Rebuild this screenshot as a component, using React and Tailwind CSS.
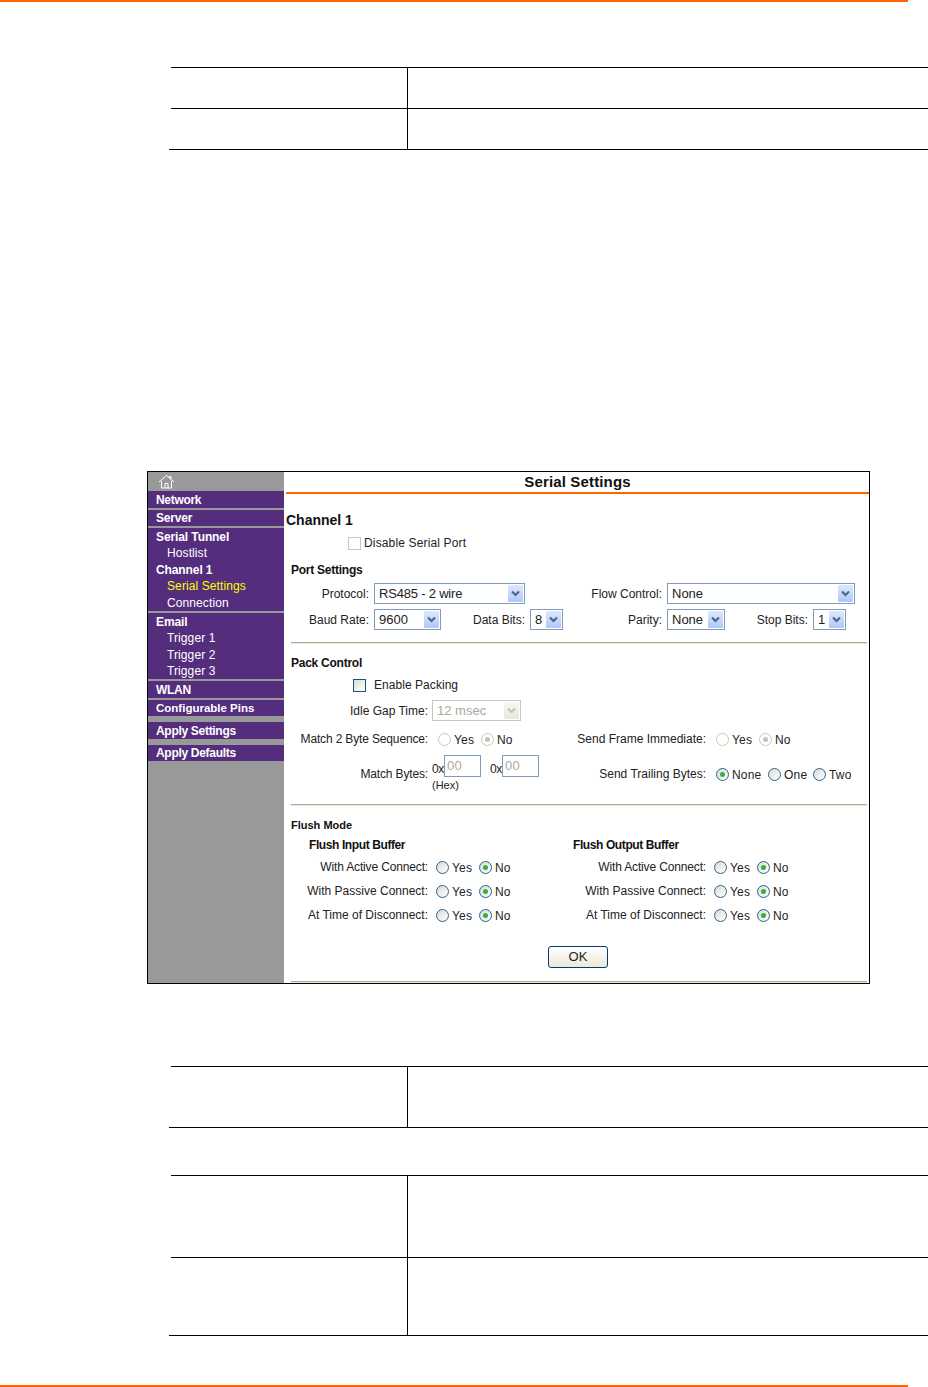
import React from 'react'

const Rule = () => <div className="h-[2px] w-[908px] bg-[#ff6600]" />

// empty two column table, the text of the manual page is blank in the picture
const EmptyTable = ({ heights }) => (
  <div>
    {heights.map((h, i) => (
      <div key={i} className={`ml-[171px] flex w-[757px] border-t border-black ${h}`}>
        <div className="w-[237px] border-r border-black" />
      </div>
    ))}
    <div className="ml-[169px] h-px w-[759px] bg-black" />
  </div>
)

const NavItem = ({ children }) => (
  <div className="flex h-[17px] items-center bg-[#552d7d] pl-2 text-[12px] font-bold tracking-[-0.3px] text-white">
    {children}
  </div>
)

const NavRow = ({ children, sub, active }) => (
  <div
    className={`flex h-[16.5px] items-center text-[12px] ${sub ? 'pl-[19px] tracking-[0.1px]' : 'pl-2 font-bold tracking-[-0.1px]'} ${active ? 'text-[#ffff00]' : 'text-white'}`}
  >
    {children}
  </div>
)

const Chevron = ({ disabled }) => (
  <svg width="9" height="7" viewBox="0 0 9 7" fill="none">
    <path d="M1 1.5 L4.5 5 L8 1.5" stroke={disabled ? '#c4c3b8' : '#4d6185'} strokeWidth="2" />
  </svg>
)

const Select = ({ value, className, disabled }) => (
  <div
    className={`flex h-[21px] shrink-0 items-center justify-between border p-px text-[13px] ${disabled ? 'border-[#c9c7ba] text-[#aca899]' : 'border-[#7f9db9] text-[#222]'} ${className}`}
  >
    <span className="pl-[3px] leading-none">{value}</span>
    <span
      className={`flex h-[17px] w-[15px] items-center justify-center rounded-[1px] bg-gradient-to-b ${disabled ? 'from-[#f7f6f1] to-[#e8e7df]' : 'from-[#dfe8fe] to-[#aec7f8]'}`}
    >
      <Chevron disabled={disabled} />
    </span>
  </div>
)

const Label = ({ children, className }) => (
  <div className={`shrink-0 text-right text-[12px] text-[#222] ${className}`}>{children}</div>
)

const Radio = ({ label, checked, disabled, className }) => (
  <div className={`flex shrink-0 items-center text-[12px] tracking-[0.2px] ${className}`}>
    <span
      className={`flex h-[13px] w-[13px] shrink-0 items-center justify-center rounded-full border bg-gradient-to-br ${disabled ? 'border-[#c9c7ba] from-white to-white' : 'border-[#2c5f8e] from-[#dcdcd4] to-white'}`}
    >
      {checked && <span className={`h-[5px] w-[5px] rounded-full ${disabled ? 'bg-[#c4c3b8]' : 'bg-[#2fb344]'}`} />}
    </span>
    <span className="ml-[3px] pt-[2px] text-[#222]">{label}</span>
  </div>
)

const Hr = ({ className }) => <div className={`ml-[7px] h-[2px] w-[576px] border-t border-[#aca899] bg-[#ece9d8] ${className}`} />

const Heading = ({ children, className }) => (
  <div className={`flex h-4 items-center font-bold text-[#111] ${className}`}>{children}</div>
)

const HexInput = () => (
  <div className="flex h-[22px] w-[37px] shrink-0 items-start border border-[#7f9db9] pl-[2px] text-[13px] leading-[19px] tracking-[0.3px] text-[#aca899]">
    00
  </div>
)

const FlushRows = () => {
  const rows = [
    ['With Active Connect:', 'mt-[6px]', 'tracking-[-0.15px]'],
    ['With Passive Connect:', 'mt-[8px]', ''],
    ['At Time of Disconnect:', 'mt-[8px]', ''],
  ]
  return (
    <div>
      {rows.map(([text, mt, track]) => (
        <div key={text} className={`flex h-4 items-center ${mt}`}>
          <Label className={`w-[144px] pb-px ${track}`}>{text}</Label>
          <Radio label="Yes" className="ml-2 w-[43px]" />
          <Radio label="No" checked />
        </div>
      ))}
    </div>
  )
}

const ScreenShot = () => (
  <div className="ml-[147px] flex h-[513px] w-[723px] border border-black bg-white">
    <div className="flex w-[136px] shrink-0 flex-col bg-[#999999]">
      <div className="flex h-[19px] items-center pl-[10px]">
        <svg width="17" height="15" viewBox="0 0 17 15" fill="none" stroke="white" strokeWidth="1">
          <path d="M1 8 L8.5 1.5 L16 8 M13 5.2 V2.5 H11.5 V3.8 M3.5 7 V14 H13.5 V7 M7 14 V9.5 H10 V14" />
        </svg>
      </div>
      <NavItem>Network</NavItem>
      <div className="mt-[2px] flex h-4 items-center bg-[#552d7d] pl-2 text-[12px] font-bold tracking-[-0.2px] text-white">Server</div>
      <div className="mt-[2px] flex h-[83px] flex-col bg-[#552d7d] pt-[0.5px]">
        <NavRow>Serial Tunnel</NavRow>
        <NavRow sub>Hostlist</NavRow>
        <NavRow>Channel 1</NavRow>
        <NavRow sub active>Serial Settings</NavRow>
        <NavRow sub>Connection</NavRow>
      </div>
      <div className="mt-[2px] flex h-[66px] flex-col bg-[#552d7d] pt-[0.5px]">
        <NavRow>Email</NavRow>
        <NavRow sub>Trigger 1</NavRow>
        <NavRow sub>Trigger 2</NavRow>
        <NavRow sub>Trigger 3</NavRow>
      </div>
      <div className="mt-[2px]"><NavItem>WLAN</NavItem></div>
      <div className="mt-[2px] flex h-4 items-center bg-[#552d7d] pl-2 pt-px text-[11.5px] font-bold text-white">Configurable Pins</div>
      <div className="mt-[6px]"><NavItem>Apply Settings</NavItem></div>
      <div className="mt-[6px] flex h-4 items-center bg-[#552d7d] pl-2 text-[12px] font-bold tracking-[-0.3px] text-white">Apply Defaults</div>
    </div>

    <div className="min-w-0 flex-1">
      <div className="flex h-5 items-center justify-center pl-[2px] text-[15px] font-bold tracking-[0.15px] text-[#111]">Serial Settings</div>
      <div className="ml-[2px] h-[2px] bg-[#ff6600]" />

      <Heading className="ml-[2px] mt-[18px] text-[14px]">Channel 1</Heading>
      <div className="mt-[7px] flex h-4 items-center pl-[64px]">
        <span className="h-[13px] w-[13px] border border-[#c9c7ba]" />
        <span className="ml-[3px] text-[12px] tracking-[0.15px] text-[#222]">Disable Serial Port</span>
      </div>

      <Heading className="ml-[7px] mt-[11px] text-[12px] tracking-[-0.25px]">Port Settings</Heading>
      <div className="mt-[5px] flex items-center">
        <Label className="w-[85px]">Protocol:</Label>
        <Select value={<span className="tracking-[-0.2px]">RS485 - 2 wire</span>} className="ml-[5px] w-[151px]" />
        <Label className="w-[137px]">Flow Control:</Label>
        <Select value="None" className="ml-[5px] w-[188px]" />
      </div>
      <div className="mt-[5px] flex items-center">
        <Label className="w-[85px]">Baud Rate:</Label>
        <Select value="9600" className="ml-[5px] w-[67px]" />
        <Label className="w-[84px]">Data Bits:</Label>
        <Select value="8" className="ml-[5px] w-[33px]" />
        <Label className="w-[99px]">Parity:</Label>
        <Select value="None" className="ml-[5px] w-[58px]" />
        <Label className="w-[83px]">Stop Bits:</Label>
        <Select value="1" className="ml-[5px] w-[33px]" />
      </div>
      <Hr className="mt-[12px]" />

      <Heading className="ml-[7px] mt-[11px] text-[12px] tracking-[-0.25px]">Pack Control</Heading>
      <div className="mt-[6px] flex h-4 items-center pl-[69px]">
        <span className="h-[13px] w-[13px] border border-[#1c5180] bg-gradient-to-br from-[#dcdcd4] to-white" />
        <span className="ml-2 text-[12px] tracking-[0.05px] text-[#222]">Enable Packing</span>
      </div>
      <div className="mt-[7px] flex items-center">
        <Label className="w-[144px]">Idle Gap Time:</Label>
        <Select disabled value="12 msec" className="ml-1 w-[89px]" />
      </div>
      <div className="mt-[10px] flex h-4 items-center">
        <div className="flex w-[282px] shrink-0 items-center">
          <Label className="w-[144px] pb-px tracking-[-0.15px]">Match 2 Byte Sequence:</Label>
          <Radio disabled label="Yes" className="ml-[10px] w-[43px]" />
          <Radio disabled checked label="No" />
        </div>
        <Label className="w-[140px] pb-px">Send Frame Immediate:</Label>
        <Radio disabled label="Yes" className="ml-[10px] w-[43px]" />
        <Radio disabled checked label="No" />
      </div>
      <div className="mt-2 flex h-[22px] items-start">
        <div className="flex w-[282px] shrink-0 items-start">
          <Label className="mt-[10px] w-[144px] tracking-[-0.15px]">Match Bytes:</Label>
          <span className="ml-1 mt-[5px] w-3 text-[12px] tracking-[-0.5px] text-[#222]">0x</span>
          <HexInput />
          <span className="ml-[9px] mt-[5px] w-3 text-[12px] tracking-[-0.5px] text-[#222]">0x</span>
          <HexInput />
        </div>
        <div className="mt-[9px] flex items-center">
          <Label className="w-[140px]">Send Trailing Bytes:</Label>
          <Radio checked label="None" className="ml-[10px] w-[52px]" />
          <Radio label="One" className="w-[45px]" />
          <Radio label="Two" />
        </div>
      </div>
      <div className="ml-[148px] mt-px h-[14px] text-[11px] leading-[14px] text-[#222]">(Hex)</div>
      <Hr className="mt-[12px]" />

      <Heading className="ml-[7px] mt-[11px] text-[11px]">Flush Mode</Heading>
      <div className="flex">
        <div className="w-[278px] shrink-0">
          <Heading className="ml-[25px] mt-1 text-[12px] tracking-[-0.4px]">Flush Input Buffer</Heading>
          <FlushRows />
        </div>
        <div>
          <Heading className="ml-[11px] mt-1 text-[12px] tracking-[-0.4px]">Flush Output Buffer</Heading>
          <FlushRows />
        </div>
      </div>

      <div className="mt-[23px] flex justify-center pl-[3px]">
        <div className="flex h-[22px] w-[60px] items-center justify-center rounded-[3px] border border-[#003c74] bg-gradient-to-b from-white to-[#ece9d8] text-[13px] text-[#222]">
          OK
        </div>
      </div>
      <Hr className="mt-[13px]" />
    </div>
  </div>
)

export default function App() {
  return (
    <div className="h-[1387px] w-[928px] overflow-hidden bg-white font-['Liberation_Sans',Arial,sans-serif]">
      <Rule />
      <div className="mt-[65px]">
        <EmptyTable heights={['h-[41px]', 'h-[41px]']} />
      </div>
      <div className="mt-[321px]">
        <ScreenShot />
      </div>
      <div className="mt-[82px]">
        <EmptyTable heights={['h-[61px]']} />
      </div>
      <div className="mt-[47px]">
        <EmptyTable heights={['h-[82px]', 'h-[78px]']} />
      </div>
      <div className="mt-[49px]">
        <Rule />
      </div>
    </div>
  )
}
